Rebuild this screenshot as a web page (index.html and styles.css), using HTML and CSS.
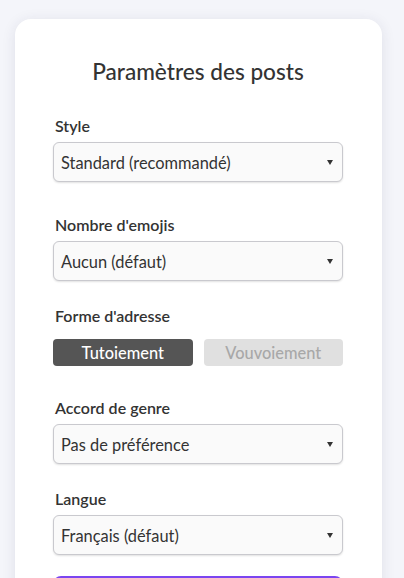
FILE: index.html
```html
<!DOCTYPE html>
<html lang="fr">
<head>
<meta charset="utf-8">
<title>Paramètres des posts</title>
<link rel="stylesheet" href="styles.css">
</head>
<body>
<div class="card">
  <h1 class="title">Paramètres des posts</h1>

  <div class="group group-wide">
    <div class="label">Style</div>
    <div class="select"><span>Standard (recommandé)</span><svg class="arrow" width="6" height="5" viewBox="0 0 6 5"><path d="M0 0H6L3 5Z" fill="#333"/></svg></div>
  </div>

  <div class="group">
    <div class="label">Nombre d'emojis</div>
    <div class="select"><span>Aucun (défaut)</span><svg class="arrow" width="6" height="5" viewBox="0 0 6 5"><path d="M0 0H6L3 5Z" fill="#333"/></svg></div>
  </div>

  <div class="group group-btns">
    <div class="label label-btns">Forme d'adresse</div>
    <div class="toggle">
      <button class="tbtn active">Tutoiement</button>
      <button class="tbtn">Vouvoiement</button>
    </div>
  </div>

  <div class="group">
    <div class="label">Accord de genre</div>
    <div class="select"><span>Pas de préférence</span><svg class="arrow" width="6" height="5" viewBox="0 0 6 5"><path d="M0 0H6L3 5Z" fill="#333"/></svg></div>
  </div>

  <div class="group group-last">
    <div class="label">Langue</div>
    <div class="select"><span>Français (défaut)</span><svg class="arrow" width="6" height="5" viewBox="0 0 6 5"><path d="M0 0H6L3 5Z" fill="#333"/></svg></div>
  </div>

  <button class="primary">Enregistrer</button>
</div>
</body>
</html>
```

FILE: styles.css
```css
html, body {
  margin: 0;
  padding: 0;
}
body {
  background: #f4f5fa;
  font-family: Lato, "Open Sans", sans-serif;
  color: #333;
  overflow: hidden;
  height: 578px;
}
.card {
  box-sizing: border-box;
  width: 367px;
  margin: 19px 0 0 15px;
  background: #fff;
  border-radius: 16px;
  box-shadow: 0 2px 14px rgba(40, 40, 80, 0.10);
  padding: 38px 39px 40px 38px;
}
.title {
  margin: 0 0 30px;
  font-size: 22.6px;
  line-height: 30px;
  font-weight: 500;
  text-align: center;
  color: #333;
}
.group {
  margin-bottom: 26px;
}
.group-wide {
  margin-bottom: 34px;
}
.group-btns {
  margin-bottom: 33px;
}
.group-last {
  margin-bottom: 21px;
}
.label {
  font-size: 16px;
  line-height: 18px;
  font-weight: 600;
  color: #333;
  margin-bottom: 7px;
  padding-left: 2px;
}
.label-btns {
  margin-bottom: 14px;
}
.select {
  box-sizing: border-box;
  height: 40px;
  display: flex;
  align-items: center;
  justify-content: space-between;
  padding: 0 9px 0 7px;
  border: 1px solid #c9c9ce;
  border-radius: 6px;
  background: #fafafa;
  box-shadow: 0 1px 2px rgba(0, 0, 0, 0.12);
  font-size: 16.4px;
  color: #333;
}
.arrow {
  display: block;
}
.toggle {
  display: flex;
  gap: 11px;
}
.tbtn {
  flex: 1;
  height: 27px;
  border: none;
  border-radius: 4px;
  background: #e0e0e0;
  color: #a8a8a8;
  font-family: Lato, "Open Sans", sans-serif;
  font-size: 16.4px;
  font-weight: 500;
  padding: 0;
}
.tbtn.active {
  background: #555;
  color: #fff;
}
.primary {
  display: block;
  width: 100%;
  height: 44px;
  border: none;
  border-radius: 8px;
  background: #7b45f0;
  color: #fff;
  font-family: Lato, "Open Sans", sans-serif;
  font-size: 16px;
  font-weight: 700;
}
```
